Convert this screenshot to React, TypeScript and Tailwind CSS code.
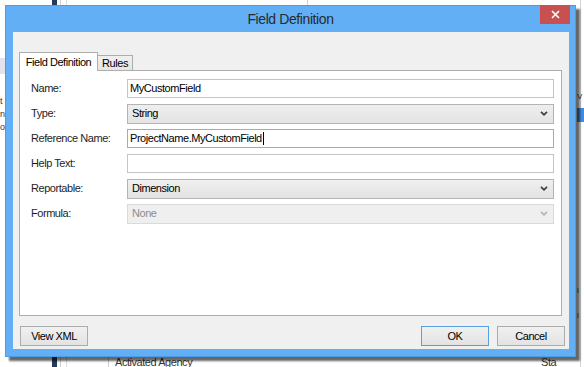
import type { ReactNode } from 'react';

const font = { fontFamily: '"Liberation Sans", Arial, sans-serif' };

function Chevron({ disabled }: { disabled?: boolean }) {
  return (
    <svg width="8" height="5" viewBox="0 0 8 5" className="shrink-0">
      <polyline
        points="1,0.8 4,3.8 7,0.8"
        fill="none"
        stroke={disabled ? '#b4b4b4' : '#3c3c3c'}
        strokeWidth="1.7"
      />
    </svg>
  );
}

function Row({ label, children }: { label: string; children: ReactNode }) {
  return (
    <div className="h-[25px] flex items-center">
      <span className="w-[96px] shrink-0 text-[#1e1e1e]">{label}</span>
      <div className="flex-1 min-w-0">{children}</div>
    </div>
  );
}

function TextBox({ value, focused, caret }: { value?: string; focused?: boolean; caret?: boolean }) {
  return (
    <div
      className={`h-[19px] bg-white border flex items-center pl-[2px] ${
        focused ? 'border-[#7eb4ea]' : 'border-[#c4c4c4]'
      }`}
    >
      <span className="text-black">{value}</span>
      {caret && <span className="w-px h-[13px] bg-black ml-px" />}
    </div>
  );
}

function Select({ value, disabled }: { value: string; disabled?: boolean }) {
  return (
    <div
      className={`h-[20px] border flex items-center justify-between pl-[4px] pr-[5px] ${
        disabled
          ? 'bg-[#efefef] border-[#dadada] text-[#8d8d8d]'
          : 'bg-gradient-to-b from-[#efefef] to-[#e3e3e3] border-[#b4b4b4] text-black'
      }`}
    >
      <span>{value}</span>
      <Chevron disabled={disabled} />
    </div>
  );
}

function Button({ children, primary }: { children: ReactNode; primary?: boolean }) {
  return (
    <button
      className={`w-[68px] h-[20px] flex items-center justify-center bg-gradient-to-b from-[#f0f0f0] to-[#e3e3e3] border text-black ${
        primary ? 'border-[#5a9fe0]' : 'border-[#acacac]'
      }`}
    >
      {children}
    </button>
  );
}

export default function App() {
  return (
    <div className="relative w-[584px] h-[367px] overflow-hidden bg-white text-[11px] tracking-[-0.45px]" style={font}>
      {/* background window bits peeking out */}
      <div className="absolute left-[52px] top-0 w-[5px] h-[367px] bg-[#243a5e]" />
      <div className="absolute left-[60px] top-0 w-px h-[367px] bg-[#d0d0d0]" />
      <div className="absolute left-[66px] top-0 w-px h-[367px] bg-[#dcdcdc]" />
      <div className="absolute left-[108px] top-[350px] w-px h-[17px] bg-[#cfcfcf]" />
      <div className="absolute left-[307px] top-0 w-px h-[6px] bg-[#cfcfcf]" />
      <div className="absolute left-[580px] top-0 w-px h-[367px] bg-[#d4d4d4]" />
      <div className="absolute left-0 top-[58px] w-[6px] h-[16px] bg-[#e2e2ea]" />
      <span className="absolute left-0 top-[97px] text-[#333] text-[9px] leading-none">t</span>
      <span className="absolute left-0 top-[110px] text-[#333] text-[9px] leading-none">n</span>
      <span className="absolute left-0 top-[123px] text-[#333] text-[9px] leading-none">o</span>
      <span className="absolute left-[577px] top-[93px] text-[#333] text-[8px] leading-none">V</span>
      <div className="absolute left-[577px] top-[108px] w-[7px] h-[14px] bg-[#3d8ee0]" />
      <span className="absolute left-[577px] top-[287px] text-[#333] text-[8px] leading-none">i</span>
      <span className="absolute left-[577px] top-[312px] text-[#333] text-[8px] leading-none">i</span>
      <span className="absolute left-[115px] top-[357px] text-[#333] leading-none">Activated Agency</span>
      <span className="absolute left-[541px] top-[357px] text-[#333] leading-none">Sta</span>

      {/* dialog window */}
      <div className="absolute left-[5px] top-[5px] w-[571px] h-[352px] bg-[#62aff6] border border-[#4d9be4] flex flex-col shadow-[4px_4px_2px_rgba(0,0,0,0.6)]">
        <div className="relative h-[26px] shrink-0 flex items-center justify-center">
          <span className="text-[14px] tracking-[-0.4px] text-[#2a2a2a]">Field Definition</span>
          <div className="absolute right-[5px] -top-px w-[30px] h-[19px] bg-[#c75050] flex items-center justify-center">
            <svg width="9" height="9" viewBox="0 0 9 9">
              <path d="M1 1L8 8M8 1L1 8" stroke="white" strokeWidth="1.6" />
            </svg>
          </div>
        </div>

        <div className="flex-1 ml-[7px] mr-[6px] mb-[7px] bg-[#f0f0f0] flex flex-col pt-[20px]">
          {/* tabs */}
          <div className="ml-[6px] mr-[7px] flex items-end h-[18px]">
            <div className="relative z-10 w-[79px] h-[19px] -mb-px bg-white border border-b-0 border-[#adadad] flex items-center justify-center">
              Field Definition
            </div>
            <div className="w-[35px] h-[15px] bg-gradient-to-b from-[#f0f0f0] to-[#e5e5e5] border border-l-0 border-b-0 border-[#adadad] flex items-center justify-center">
              Rules
            </div>
          </div>

          {/* tab panel */}
          <div className="ml-[6px] mr-[7px] h-[246px] bg-white border border-[#adadad] pt-[5px] pl-[11px] pr-[7px]">
            <Row label="Name:">
              <TextBox value="MyCustomField" />
            </Row>
            <Row label="Type:">
              <Select value="String" />
            </Row>
            <Row label="Reference Name:">
              <TextBox value="ProjectName.MyCustomField" focused caret />
            </Row>
            <Row label="Help Text:">
              <TextBox />
            </Row>
            <Row label="Reportable:">
              <Select value="Dimension" />
            </Row>
            <Row label="Formula:">
              <Select value="None" disabled />
            </Row>
          </div>

          {/* buttons */}
          <div className="mt-[10px] h-[20px] pl-[7px] pr-[4px] flex items-center">
            <Button>View XML</Button>
            <div className="flex-1" />
            <div className="flex gap-[8px]">
              <Button primary>OK</Button>
              <Button>Cancel</Button>
            </div>
          </div>
        </div>
      </div>
    </div>
  );
}
